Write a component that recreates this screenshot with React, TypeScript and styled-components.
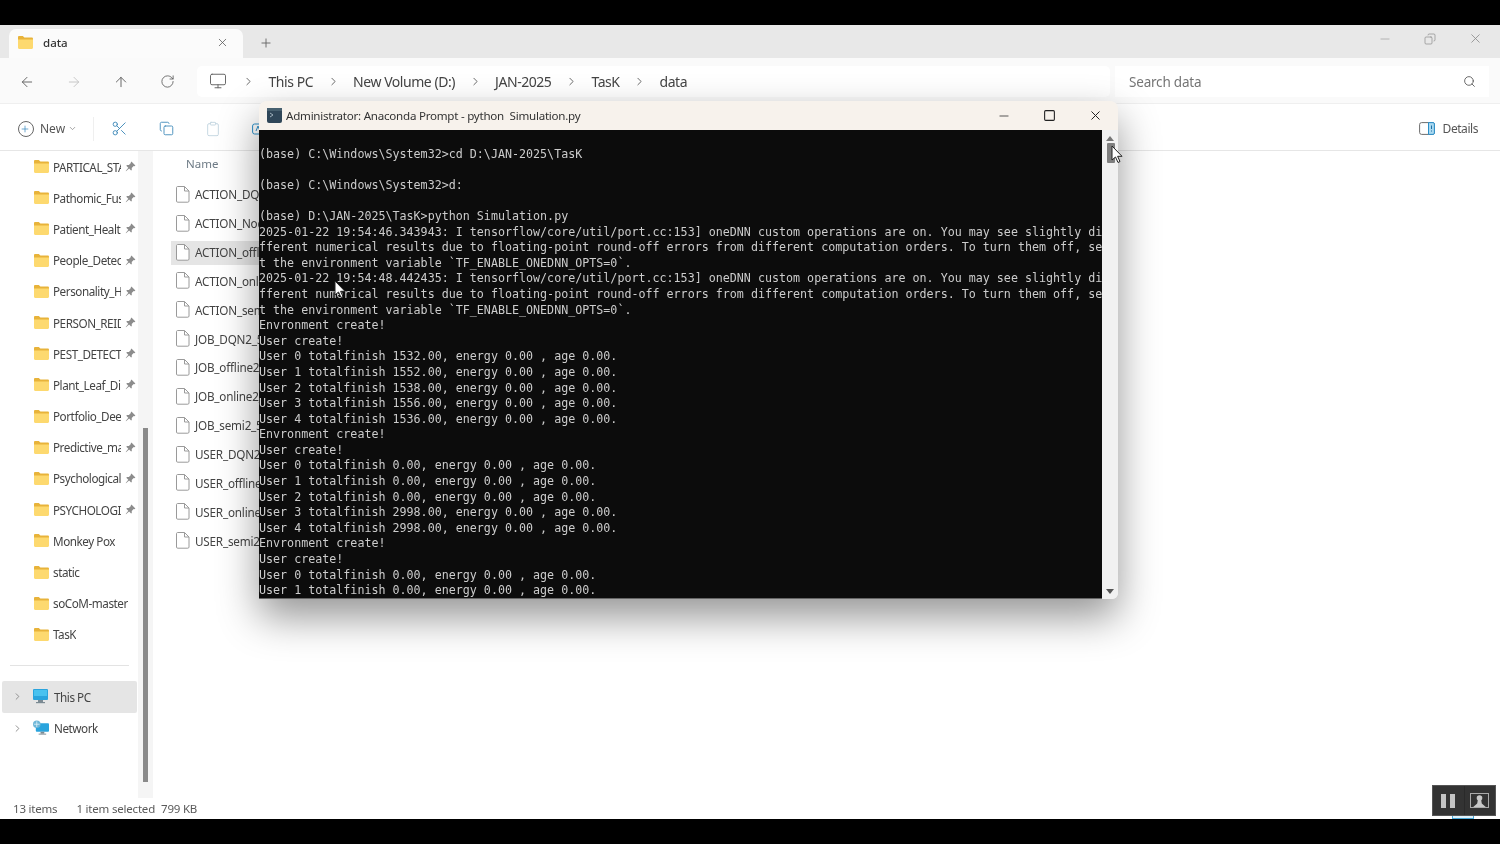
import styled, { createGlobalStyle } from 'styled-components';
import {
  ArrowLeft,
  ArrowRight,
  ArrowUp,
  ChevronDown,
  ChevronRight,
  Clipboard,
  Copy,
  Minus,
  Monitor,
  Plus,
  RotateCw,
  Scissors,
  Search,
  Square,
  X,
} from 'lucide-react';

const GlobalStyle = createGlobalStyle`
  html, body { margin: 0; padding: 0; background: #000; height: 100%; overflow: hidden; }
  #root { height: 100%; }
  * { box-sizing: border-box; }
`;

const UI_FONT = `"Noto Sans", "Open Sans", sans-serif`;

const pinnedFolders = [
  'PARTICAL_STATE', 'Pathomic_Fusion', 'Patient_Health', 'People_Detection', 'Personality_Hub',
  'PERSON_REID_X', 'PEST_DETECTION', 'Plant_Leaf_Dis', 'Portfolio_Deep', 'Predictive_main',
  'Psychological', 'PSYCHOLOGICAL',
];
const plainFolders = ['Monkey Pox', 'static', 'soCoM-master', 'TasK'];

const files = [
  'ACTION_DQN2_500', 'ACTION_Noderl', 'ACTION_offline', 'ACTION_online', 'ACTION_semi2',
  'JOB_DQN2_500', 'JOB_offline2_5', 'JOB_online2_5', 'JOB_semi2_500',
  'USER_DQN2_500', 'USER_offline2', 'USER_online2', 'USER_semi2_50',
];

const crumbs = ['This PC', 'New Volume (D:)', 'JAN-2025', 'TasK', 'data'];

const terminalLines = [
  '',
  '(base) C:\\Windows\\System32>cd D:\\JAN-2025\\TasK',
  '',
  '(base) C:\\Windows\\System32>d:',
  '',
  '(base) D:\\JAN-2025\\TasK>python Simulation.py',
  '2025-01-22 19:54:46.343943: I tensorflow/core/util/port.cc:153] oneDNN custom operations are on. You may see slightly di',
  'fferent numerical results due to floating-point round-off errors from different computation orders. To turn them off, se',
  't the environment variable `TF_ENABLE_ONEDNN_OPTS=0`.',
  '2025-01-22 19:54:48.442435: I tensorflow/core/util/port.cc:153] oneDNN custom operations are on. You may see slightly di',
  'fferent numerical results due to floating-point round-off errors from different computation orders. To turn them off, se',
  't the environment variable `TF_ENABLE_ONEDNN_OPTS=0`.',
  'Envronment create!',
  'User create!',
  'User 0 totalfinish 1532.00, energy 0.00 , age 0.00.',
  'User 1 totalfinish 1552.00, energy 0.00 , age 0.00.',
  'User 2 totalfinish 1538.00, energy 0.00 , age 0.00.',
  'User 3 totalfinish 1556.00, energy 0.00 , age 0.00.',
  'User 4 totalfinish 1536.00, energy 0.00 , age 0.00.',
  'Envronment create!',
  'User create!',
  'User 0 totalfinish 0.00, energy 0.00 , age 0.00.',
  'User 1 totalfinish 0.00, energy 0.00 , age 0.00.',
  'User 2 totalfinish 0.00, energy 0.00 , age 0.00.',
  'User 3 totalfinish 2998.00, energy 0.00 , age 0.00.',
  'User 4 totalfinish 2998.00, energy 0.00 , age 0.00.',
  'Envronment create!',
  'User create!',
  'User 0 totalfinish 0.00, energy 0.00 , age 0.00.',
  'User 1 totalfinish 0.00, energy 0.00 , age 0.00.',
];

const FolderIcon = () => (
  <svg width="15" height="13" viewBox="0 0 15 13" style={{ flex: 'none' }}>
    <path d="M0 1.2C0 .5.5 0 1.2 0h3.6l1.6 1.6h7.4c.6 0 1.2.5 1.2 1.2V5H0z" fill="#e8b33a" />
    <path d="M0 3.4h15v8.400c0 .7-.5 1.200-1.200 1.200H1.200C.5 13 0 12.500 0 11.800z" fill="#fdd96f" />
  </svg>
);

const PinIcon = () => (
  <svg width="11" height="11" viewBox="0 0 11 11" style={{ flex: 'none' }}>
    <path d="M6.4.6l4 4-1 .6-.7-.2-2 2 .1 1.900-.7.7-2-2L1 10.200l-.3-.3 2.600-3.200-2-2 .7-.7 1.900.1 2-2-.2-.7z" fill="#8c8c8c" />
  </svg>
);

const FileIcon = () => (
  <svg width="14" height="17" viewBox="0 0 14 17" style={{ flex: 'none' }}>
    <path d="M1.500.5h7l4.500 4.500v10a1.200 1.200 0 0 1-1.200 1.200H1.700A1.200 1.200 0 0 1 .5 15V1.700A1.200 1.200 0 0 1 1.500.5z" fill="#fff" stroke="#9a9a9a" />
    <path d="M8.500.5V5H13" fill="none" stroke="#9a9a9a" />
  </svg>
);

const PcIcon = () => (
  <svg width="16" height="15" viewBox="0 0 16 15" style={{ flex: 'none' }}>
    <rect x="0" y="0" width="15" height="11" rx="1" fill="#2aa4dd" />
    <rect x="1" y="1" width="13" height="6" fill="#49c2ef" />
    <rect x="5" y="11" width="5" height="2" fill="#7b8a93" />
    <rect x="3" y="13" width="9" height="1.200" fill="#7b8a93" />
  </svg>
);

const NetworkIcon = () => (
  <svg width="16" height="16" viewBox="0 0 17 16" style={{ flex: 'none' }}>
    <rect x="3" y="3" width="14" height="9" rx="1" fill="#2aa4dd" />
    <rect x="8" y="12" width="4" height="2" fill="#7b8a93" />
    <rect x="6" y="14" width="8" height="1" fill="#7b8a93" />
    <circle cx="4" cy="4" r="4" fill="#6fb7d8" />
    <path d="M1 4h6M4 1v6" stroke="#e5f4fb" strokeWidth=".8" />
  </svg>
);

const DetailsIcon = () => (
  <svg width="16" height="13" viewBox="0 0 16 13">
    <rect x=".6" y=".6" width="14.800" height="11.800" rx="2" fill="#fff" stroke="#6d6d6d" />
    <path d="M9.500.6H14a1.400 1.400 0 0 1 1.400 1.400v9a1.400 1.400 0 0 1-1.400 1.400H9.500z" fill="#a9d8f0" stroke="#2a8fc9" />
    <path d="M12.500 3.500v3.500M12.500 8.500v1" stroke="#1d6fa5" />
  </svg>
);

const PromptIcon = () => (
  <svg width="15" height="15" viewBox="0 0 15 15" style={{ flex: 'none' }}>
    <rect width="15" height="15" rx="2" fill="#2f4658" />
    <rect y="0" width="15" height="3" fill="#47606f" />
    <path d="M3 5l3 2-3 2" stroke="#9fb0bb" fill="none" />
  </svg>
);

const RenameIcon = () => (
  <svg width="16" height="16" viewBox="0 0 16 16">
    <rect x=".6" y="3" width="14" height="10" rx="2" fill="none" stroke="#2a8fc9" />
    <path d="M4 10l2-5 2 5" fill="none" stroke="#2a8fc9" />
  </svg>
);

const Pointer = () => (
  <svg width="12" height="18" viewBox="0 0 12 18">
    <path d="M1 1v14l3.500-3 2.500 5.500 2-1-2.400-5.200H11z" fill="#fff" stroke="#222" strokeWidth="1" />
  </svg>
);

const App = () => {
  return (
    <>
      <GlobalStyle />
      <Screen>
        <Explorer>
          <TabStrip>
            <Tab>
              <FolderIcon />
              <TabLabel>data</TabLabel>
              <X size={13} color="#555" strokeWidth={1.4} />
            </Tab>
            <NewTab>
              <Plus size={14} color="#666" strokeWidth={1.6} />
            </NewTab>
            <WindowButtons>
              <Minus size={14} color="#a3a3a3" strokeWidth={1.3} />
              <RestoreIcon>
                <Copy size={12} color="#8a8a8a" strokeWidth={1.4} />
              </RestoreIcon>
              <X size={15} color="#8a8a8a" strokeWidth={1.3} />
            </WindowButtons>
          </TabStrip>

          <AddressRow>
            <NavButtons>
              <ArrowLeft size={16} color="#5f5f5f" strokeWidth={1.4} />
              <ArrowRight size={16} color="#c4c4c4" strokeWidth={1.4} />
              <ArrowUp size={16} color="#5f5f5f" strokeWidth={1.4} />
              <RotateCw size={15} color="#5f5f5f" strokeWidth={1.4} />
            </NavButtons>
            <Breadcrumb>
              <Monitor size={18} color="#666" strokeWidth={1.3} />
              <ChevronRight size={13} color="#555" strokeWidth={1.6} />
              {crumbs.map((c, i) => (
                <Crumb key={c}>
                  <span>{c}</span>
                  {i < crumbs.length - 1 && <ChevronRight size={13} color="#555" strokeWidth={1.6} />}
                </Crumb>
              ))}
            </Breadcrumb>
            <SearchBox>
              <span>Search data</span>
              <Search size={13} color="#555" strokeWidth={1.6} />
            </SearchBox>
          </AddressRow>

          <CommandBar>
            <NewButton>
              <CirclePlus>
                <Plus size={10} color="#2a7fb8" strokeWidth={1.6} />
              </CirclePlus>
              <span>New</span>
              <ChevronDown size={9} color="#888" />
            </NewButton>
            <CommandSep />
            <CommandIcons>
              <Scissors size={17} color="#3d88b8" strokeWidth={1.3} />
              <Copy size={15} color="#3d88b8" strokeWidth={1.4} />
              <Clipboard size={16} color="#c3d5e0" strokeWidth={1.4} />
              <RenameIcon />
            </CommandIcons>
            <DetailsButton>
              <DetailsIcon />
              <span>Details</span>
            </DetailsButton>
          </CommandBar>

          <Body>
            <Sidebar>
              {pinnedFolders.map((f) => (
                <NavRow key={f}>
                  <FolderIcon />
                  <NavLabel $pinned>{f}</NavLabel>
                  <PinIcon />
                </NavRow>
              ))}
              {plainFolders.map((f) => (
                <NavRow key={f}>
                  <FolderIcon />
                  <NavLabel>{f}</NavLabel>
                </NavRow>
              ))}
              <NavDivider />
              <DriveRow $active>
                <ChevronRight size={11} color="#888" />
                <PcIcon />
                <NavLabel>This PC</NavLabel>
              </DriveRow>
              <DriveRow>
                <ChevronRight size={11} color="#888" />
                <NetworkIcon />
                <NavLabel>Network</NavLabel>
              </DriveRow>
            </Sidebar>
            <SideTrack>
              <SideThumb />
            </SideTrack>
            <FileList>
              <ColumnHead>Name</ColumnHead>
              {files.map((f, i) => (
                <FileRow key={f} $selected={i === 2}>
                  <FileIcon />
                  <span>{f}</span>
                </FileRow>
              ))}
            </FileList>
          </Body>

          <StatusBar>
            <span>13 items</span>
            <StatusSelected>1 item selected</StatusSelected>
            <span>799 KB</span>
          </StatusBar>

          <Terminal>
            <TerminalTitle>
              <PromptIcon />
              <TerminalName>Administrator: Anaconda Prompt - python&nbsp; Simulation.py</TerminalName>
              <TerminalButtons>
                <Minus size={14} color="#333" strokeWidth={1.4} />
                <Square size={13} color="#222" strokeWidth={2} />
                <X size={15} color="#222" strokeWidth={1.6} />
              </TerminalButtons>
            </TerminalTitle>
            <TerminalBody>
              <TerminalText>{terminalLines.join('\n')}</TerminalText>
              <TerminalScroll>
                <ArrowUpMark />
                <TerminalThumb />
                <ArrowDownMark />
              </TerminalScroll>
            </TerminalBody>
          </Terminal>

          <PointerA>
            <Pointer />
          </PointerA>
          <PointerB>
            <Pointer />
          </PointerB>

          <PlayerControls>
            <PlayerButton>
              <svg width="15" height="14" viewBox="0 0 15 14">
                <rect x="0" width="5" height="14" fill="#c4c4c4" />
                <rect x="9" width="5" height="14" fill="#c4c4c4" />
              </svg>
            </PlayerButton>
            <PlayerButton>
              <svg width="19" height="15" viewBox="0 0 19 15">
                <rect x=".5" y=".5" width="18" height="14" fill="none" stroke="#aaa" />
                <circle cx="9.500" cy="5" r="2.800" fill="#c8c8c8" />
                <path d="M8 6h3l.8 4.500 4 3.500H3.200l4-3.500z" fill="#c8c8c8" />
              </svg>
            </PlayerButton>
          </PlayerControls>
          <PlayerSliver />
        </Explorer>
      </Screen>
    </>
  );
};

export default App;

const Screen = styled.div`
  width: 1500px;
  height: 844px;
  padding: 25px 0;
  background: #000;
  overflow: hidden;
`;

const Explorer = styled.div`
  position: relative;
  height: 794px;
  display: flex;
  flex-direction: column;
  background: #fff;
  font-family: ${UI_FONT};
  color: #444;
  filter: blur(0.45px);
`;

const TabStrip = styled.div`
  height: 33px;
  flex: none;
  display: flex;
  align-items: flex-end;
  padding-left: 9px;
  background: #e8e8e8;
`;

const Tab = styled.div`
  width: 234px;
  height: 29px;
  display: flex;
  align-items: center;
  padding: 0 14px 2px 9px;
  background: #fbfbfb;
  border-radius: 7px 7px 0 0;
`;

const TabLabel = styled.span`
  flex: 1;
  margin-left: 10px;
  font-size: 11.5px;
  font-weight: 500;
  color: #333;
`;

const NewTab = styled.div`
  width: 46px;
  height: 31px;
  display: flex;
  align-items: center;
  justify-content: center;
`;

const WindowButtons = styled.div`
  margin-left: auto;
  align-self: flex-start;
  width: 105px;
  margin-right: 17.5px;
  padding-top: 6px;
  display: flex;
  align-items: center;
  justify-content: space-between;
`;

const RestoreIcon = styled.span`
  display: flex;
  transform: scaleX(-1);
`;

const AddressRow = styled.div`
  height: 46px;
  flex: none;
  display: flex;
  align-items: center;
  background: #fafafa;
  border-bottom: 1px solid #efefef;
  padding-right: 11px;
`;

const NavButtons = styled.div`
  width: 197px;
  flex: none;
  display: flex;
  align-items: center;
  gap: 31px;
  margin-top: 2px;
  padding-left: 19px;
`;

const Breadcrumb = styled.div`
  width: 913px;
  height: 31px;
  margin-top: 1px;
  flex: none;
  display: flex;
  align-items: center;
  gap: 8px;
  padding-left: 12px;
  background: #fff;
  border-radius: 5px;
  font-size: 14px;
  letter-spacing: -0.45px;
  color: #444;

  > svg:first-child {
    margin-right: 7px;
  }
`;

const Crumb = styled.div`
  display: flex;
  align-items: center;
  gap: 13.5px;
  margin-left: 5.5px;
`;

const SearchBox = styled.div`
  flex: 1;
  height: 31px;
  margin-left: 5px;
  margin-top: 2px;
  display: flex;
  align-items: center;
  justify-content: space-between;
  padding: 0 13px 0 14px;
  background: #fff;
  font-size: 13.5px;
  letter-spacing: -0.2px;
  color: #757575;
`;

const CommandBar = styled.div`
  height: 47px;
  flex: none;
  display: flex;
  align-items: center;
  background: #fff;
  border-bottom: 1px solid #e6e6e6;
  padding: 3px 22px 0 18px;
`;

const NewButton = styled.div`
  width: 75px;
  flex: none;
  display: flex;
  align-items: center;
  gap: 6px;
  font-size: 12px;
  color: #555;

  svg:last-child {
    margin-left: -3px;
  }
`;

const CirclePlus = styled.span`
  width: 16px;
  height: 16px;
  display: flex;
  align-items: center;
  justify-content: center;
  border: 1px solid #666;
  border-radius: 50%;
`;

const CommandSep = styled.div`
  width: 1px;
  height: 24px;
  background: #efefef;
`;

const CommandIcons = styled.div`
  display: flex;
  align-items: center;
  gap: 31px;
  margin-left: 17px;
`;

const DetailsButton = styled.div`
  margin-left: auto;
  display: flex;
  align-items: center;
  gap: 8px;
  font-size: 12px;
  letter-spacing: -0.45px;
  color: #555;
`;

const Body = styled.div`
  flex: 1;
  min-height: 0;
  display: flex;
`;

const Sidebar = styled.div`
  width: 138px;
  flex: none;
`;

const NavRow = styled.div`
  height: 31.2px;
  display: flex;
  align-items: center;
  padding-left: 34px;
  gap: 4px;
`;

const NavLabel = styled.span<{ $pinned?: boolean }>`
  width: ${(p) => (p.$pinned ? '68px' : 'auto')};
  white-space: nowrap;
  overflow: hidden;
  font-size: 11.7px;
  letter-spacing: -0.45px;
  color: #444;
`;

const NavDivider = styled.div`
  height: 1px;
  margin: 15px 9px 15px 10px;
  background: #e3e3e3;
`;

const DriveRow = styled.div<{ $active?: boolean }>`
  height: 31.5px;
  margin: 0 1px 0 2px;
  display: flex;
  align-items: center;
  padding-left: 10px;
  gap: 5px;
  background: ${(p) => (p.$active ? '#e5e5e5' : 'transparent')};
  border-radius: 2px;

  svg:first-child {
    margin-right: 5px;
  }
`;

const SideTrack = styled.div`
  width: 15px;
  flex: none;
  padding: 277px 5px 16px;
  background: #f5f5f5;
`;

const SideThumb = styled.div`
  width: 5px;
  height: 100%;
  background: #8a8a8a;
`;

const FileList = styled.div`
  flex: 1;
  padding-left: 18px;
  white-space: nowrap;
  overflow: hidden;
`;

const ColumnHead = styled.div`
  height: 29px;
  padding: 5px 0 0 15px;
  font-size: 11.5px;
  color: #6d7a85;
`;

const FileRow = styled.div<{ $selected?: boolean }>`
  width: 88px;
  height: 28.85px;
  display: flex;
  align-items: center;
  gap: 5px;
  padding-left: 5px;
  overflow: hidden;
  font-size: 11.7px;
  letter-spacing: -0.2px;
  color: #444;
  background: ${(p) => (p.$selected ? 'linear-gradient(#e5e5e5, #e5e5e5) 0 3px / 100% 24px no-repeat' : 'none')};

  span {
    flex: none;
  }
`;

const StatusBar = styled.div`
  height: 21px;
  flex: none;
  display: flex;
  align-items: center;
  gap: 6px;
  padding-left: 13px;
  font-size: 11.5px;
  letter-spacing: -0.2px;
  color: #5a5a5a;
`;

const StatusSelected = styled.span`
  margin-left: 13px;
`;

const Terminal = styled.div`
  position: absolute;
  left: 259px;
  top: 76px;
  width: 859px;
  height: 498px;
  display: flex;
  flex-direction: column;
  border-radius: 8px 8px 6px 6px;
  background: #f2f2f2;
  box-shadow: 0 18px 40px rgba(0, 0, 0, 0.42);
`;

const TerminalTitle = styled.div`
  height: 29px;
  flex: none;
  display: flex;
  align-items: center;
  padding: 0 15px 0 8px;
  background: #f7f2ec;
  border-radius: 8px 8px 0 0;
`;

const TerminalName = styled.span`
  flex: 1;
  margin-left: 4px;
  font-size: 11.6px;
  letter-spacing: -0.25px;
  color: #333;
`;

const TerminalButtons = styled.div`
  display: flex;
  align-items: center;
  gap: 32px;
`;

const TerminalBody = styled.div`
  flex: 1;
  min-height: 0;
  display: flex;
`;

const TerminalText = styled.pre`
  width: 843px;
  margin: 0;
  flex: none;
  overflow: hidden;
  background: #0c0c0c;
  border-bottom: 1px solid #666;
  color: #cccccc;
  font-family: "DejaVu Sans Mono", monospace;
  font-size: 11.68px;
  line-height: 15.6px;
  padding-top: 1px;
`;

const TerminalScroll = styled.div`
  flex: 1;
  display: flex;
  flex-direction: column;
  align-items: center;
  padding: 6px 0 5px;
  background: #f1f1f1;
  border-radius: 0 0 6px 0;
`;

const TerminalThumb = styled.div`
  width: 8px;
  height: 20px;
  margin: 2px 0 auto 2px;
  background: #7f7f7f;
  border-radius: 1px;
`;

const ArrowUpMark = styled.div`
  width: 0;
  height: 0;
  border: 4px solid transparent;
  border-top: 0;
  border-bottom: 5px solid #777;
`;

const ArrowDownMark = styled.div`
  width: 0;
  height: 0;
  border: 4px solid transparent;
  border-bottom: 0;
  border-top: 5px solid #555;
`;

const PointerA = styled.div`
  position: absolute;
  left: 334px;
  top: 255px;
  line-height: 0;
`;

const PointerB = styled.div`
  position: absolute;
  left: 1111px;
  top: 120px;
  line-height: 0;
`;

const PlayerControls = styled.div`
  position: absolute;
  left: 1432px;
  top: 760px;
  width: 64px;
  height: 31px;
  display: flex;
  background: #333;
  border: 1px solid #555;
`;

const PlayerButton = styled.div`
  flex: 1;
  display: flex;
  align-items: center;
  justify-content: center;

  & + & {
    border-left: 1px solid #2a2a2a;
  }
`;

const PlayerSliver = styled.div`
  position: absolute;
  left: 1452px;
  top: 791px;
  width: 22px;
  height: 3px;
  background: #dff2fb;
  border: 1px solid #4aa8d8;
  border-top: 0;
`;
